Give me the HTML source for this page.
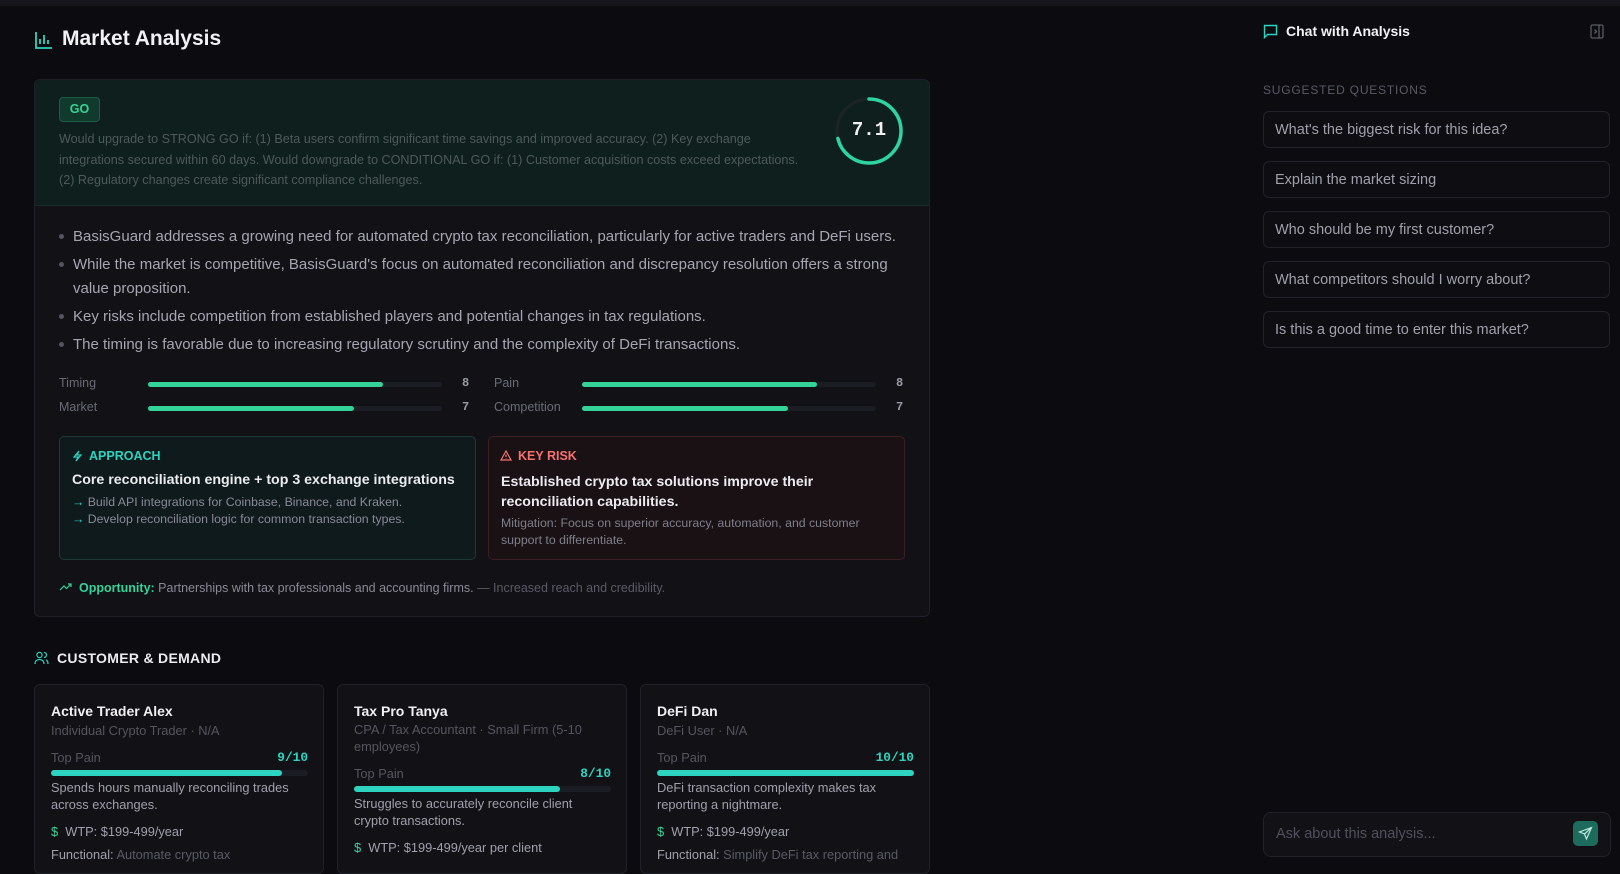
<!DOCTYPE html>
<html><head><meta charset="utf-8"><style>
*{box-sizing:border-box;margin:0;padding:0}
body{width:1620px;height:861px;overflow:hidden;background:#0b0b10;font-family:"Liberation Sans",sans-serif;color:#e6e6ea;position:relative}
.a{position:absolute}
.top{left:0;top:0;width:1620px;height:6px;background:#16161c}
.card{border:1px solid #202028;border-radius:6px;background:#111116}
.mut{color:#6b6b78}
.txt{color:#a6a6b2}
.bar{height:5px;border-radius:3px;background:#1c1c24}
.bar i{display:block;height:5px;border-radius:3px;background:#34d399}
.q{left:1263px;width:347px;height:37px;border:1px solid #22222b;border-radius:6px;font-size:14.5px;color:#a0a0ac;padding:10px 11px;background:#0d0d12}
.mono{font-family:"Liberation Mono",monospace;font-weight:bold}
.ct{font-size:12.8px}
</style></head><body>
<div class="a top"></div>
<svg class="a" style="left:35px;top:31px" width="18" height="18" viewBox="0 0 18 18" fill="none" stroke="#2dd4bf" stroke-width="1.8"><path d="M1 1v16h16M5 13V8M9 13V4M13 13V9"/></svg>
<div class="a" style="left:62px;top:27px;font-size:21px;font-weight:bold;color:#f2f2f4">Market Analysis</div>

<div class="a card" style="left:34px;top:79px;width:896px;height:538px;overflow:hidden">
 <div style="height:126px;background:#0f1f1e;border-bottom:1px solid #1a2a28"></div>
</div>
<div class="a" style="left:59px;top:97px;width:41px;height:25px;border:1px solid #1f5a44;background:#0f3a2c;border-radius:4px;color:#34d399;font-size:12.5px;font-weight:bold;text-align:center;line-height:23px">GO</div>
<div class="a" style="left:59px;top:129px;width:758px;font-size:12.6px;line-height:20.5px;color:#4e5a5a">Would upgrade to STRONG GO if: (1) Beta users confirm significant time savings and improved accuracy. (2) Key exchange<br>integrations secured within 60 days. Would downgrade to CONDITIONAL GO if: (1) Customer acquisition costs exceed expectations.<br>(2) Regulatory changes create significant compliance challenges.</div>
<svg class="a" style="left:834px;top:96px" width="70" height="70" viewBox="0 0 70 70"><circle cx="35" cy="35" r="32" fill="none" stroke="#1b2324" stroke-width="3.5"/><circle cx="35" cy="35" r="32" fill="none" stroke="#2dd4a0" stroke-width="3.5" stroke-dasharray="143 201" transform="rotate(-90 35 35)" stroke-linecap="round"/></svg>
<div class="a mono" style="left:834px;top:119px;width:70px;text-align:center;font-size:19px;color:#f0f0f0">7.1</div>

<div class="a txt" style="left:59px;top:225px;width:850px;font-size:15px;line-height:24px">
<div style="position:relative;padding-left:14px;margin-bottom:4px"><span style="position:absolute;left:0;top:9px;width:5px;height:5px;border-radius:50%;background:#55555f"></span>BasisGuard addresses a growing need for automated crypto tax reconciliation, particularly for active traders and DeFi users.</div>
<div style="position:relative;padding-left:14px;margin-bottom:4px;width:840px"><span style="position:absolute;left:0;top:9px;width:5px;height:5px;border-radius:50%;background:#55555f"></span>While the market is competitive, BasisGuard's focus on automated reconciliation and discrepancy resolution offers a strong value proposition.</div>
<div style="position:relative;padding-left:14px;margin-bottom:4px"><span style="position:absolute;left:0;top:9px;width:5px;height:5px;border-radius:50%;background:#55555f"></span>Key risks include competition from established players and potential changes in tax regulations.</div>
<div style="position:relative;padding-left:14px"><span style="position:absolute;left:0;top:9px;width:5px;height:5px;border-radius:50%;background:#55555f"></span>The timing is favorable due to increasing regulatory scrutiny and the complexity of DeFi transactions.</div>
</div>

<div class="a mut" style="left:59px;top:376px;font-size:12.5px">Timing</div>
<div class="a bar" style="left:148px;top:382px;width:294px"><i style="width:80%"></i></div>
<div class="a mono mut" style="left:462px;top:376px;font-size:12px;color:#9a9aa6">8</div>
<div class="a mut" style="left:59px;top:400px;font-size:12.5px">Market</div>
<div class="a bar" style="left:148px;top:406px;width:294px"><i style="width:70%"></i></div>
<div class="a mono" style="left:462px;top:400px;font-size:12px;color:#9a9aa6">7</div>
<div class="a mut" style="left:494px;top:376px;font-size:12.5px">Pain</div>
<div class="a bar" style="left:582px;top:382px;width:294px"><i style="width:80%"></i></div>
<div class="a mono" style="left:896px;top:376px;font-size:12px;color:#9a9aa6">8</div>
<div class="a mut" style="left:494px;top:400px;font-size:12.5px">Competition</div>
<div class="a bar" style="left:582px;top:406px;width:294px"><i style="width:70%"></i></div>
<div class="a mono" style="left:896px;top:400px;font-size:12px;color:#9a9aa6">7</div>

<div class="a" style="left:59px;top:436px;width:417px;height:124px;border:1px solid #1b3a36;border-radius:5px;background:#0f1a1c"></div>
<svg class="a" style="left:72px;top:450px" width="11" height="12" viewBox="0 0 11 12" fill="none" stroke="#2dd4bf" stroke-width="1.2"><path d="M7 1L2 7h4l-2 4 5-6H5z"/></svg>
<div class="a" style="left:89px;top:449px;font-size:12.5px;font-weight:bold;color:#2dd4bf">APPROACH</div>
<div class="a" style="left:72px;top:472px;font-size:14.2px;font-weight:bold;color:#ececf0">Core reconciliation engine + top 3 exchange integrations</div>
<div class="a txt" style="left:72px;top:494px;font-size:12.3px;line-height:16.5px;color:#8a8a96"><span style="color:#2dd4bf">→</span> Build API integrations for Coinbase, Binance, and Kraken.<br><span style="color:#2dd4bf">→</span> Develop reconciliation logic for common transaction types.</div>

<div class="a" style="left:488px;top:436px;width:417px;height:124px;border:1px solid #3d1f22;border-radius:5px;background:#1a1114"></div>
<svg class="a" style="left:500px;top:450px" width="12" height="11" viewBox="0 0 12 11" fill="none" stroke="#f87171" stroke-width="1.2"><path d="M6 1L1 10h10zM6 4.5v2.5M6 8.2v.4"/></svg>
<div class="a" style="left:518px;top:449px;font-size:12.5px;font-weight:bold;color:#f87171">KEY RISK</div>
<div class="a" style="left:501px;top:472px;width:390px;font-size:14.2px;font-weight:bold;line-height:20px;color:#ececf0">Established crypto tax solutions improve their reconciliation capabilities.</div>
<div class="a" style="left:501px;top:515px;width:400px;font-size:12.3px;line-height:16.5px;color:#7f7f8b">Mitigation: Focus on superior accuracy, automation, and customer support to differentiate.</div>

<svg class="a" style="left:59px;top:582px" width="13" height="9" viewBox="0 0 13 9" fill="none" stroke="#34d399" stroke-width="1.2"><path d="M1 8l4-4 2.5 2.5L12 2M9 2h3v3"/></svg>
<div class="a" style="left:79px;top:581px;font-size:12.5px;color:#8a8a96"><b style="color:#34d399">Opportunity:</b> Partnerships with tax professionals and accounting firms. <span style="color:#5a5a66">— Increased reach and credibility.</span></div>

<svg class="a" style="left:34px;top:651px" width="15" height="14" viewBox="0 0 15 14" fill="none" stroke="#2dd4bf" stroke-width="1.2"><circle cx="5.5" cy="4" r="2.6"/><path d="M1 13c0-3 2-4.5 4.5-4.5S10 10 10 13M10 1.5a2.5 2.5 0 010 5M12 8.8c1.3.6 2 2 2 4.2"/></svg>
<div class="a" style="left:57px;top:650px;font-size:14px;font-weight:bold;color:#ececf0;letter-spacing:.3px">CUSTOMER &amp; DEMAND</div>

<div class="a card" style="left:34px;top:684px;width:290px;height:190px"></div>
<div class="a card" style="left:337px;top:684px;width:290px;height:190px"></div>
<div class="a card" style="left:640px;top:684px;width:290px;height:190px"></div>

<div class="a" style="left:51px;top:703px;width:257px">
 <div style="font-size:14px;font-weight:bold;color:#f0f0f2">Active Trader Alex</div>
 <div class="ct" style="color:#55555f;margin-top:3px;line-height:17px">Individual Crypto Trader · N/A</div>
 <div class="ct" style="display:flex;justify-content:space-between;margin-top:11px;color:#55555f">Top Pain<span class="mono" style="color:#2dd4bf">9/10</span></div>
 <div class="bar" style="margin-top:5px;height:6px;background:#1c1c24"><i style="width:90%;height:6px;background:#2dd4bf"></i></div>
 <div class="ct" style="color:#a0a0ac;line-height:16.5px;margin-top:4px">Spends hours manually reconciling trades across exchanges.</div>
 <div class="ct" style="color:#a0a0ac;margin-top:11px"><span style="color:#34d399">$</span>&nbsp; WTP: $199-499/year</div>
 <div class="ct" style="color:#a0a0ac;margin-top:8px">Functional: <span style="color:#5a5a66">Automate crypto tax</span></div>
</div>
<div class="a" style="left:354px;top:703px;width:257px">
 <div style="font-size:14px;font-weight:bold;color:#f0f0f2">Tax Pro Tanya</div>
 <div class="ct" style="color:#55555f;margin-top:3px;line-height:16.5px">CPA / Tax Accountant · Small Firm (5-10 employees)</div>
 <div class="ct" style="display:flex;justify-content:space-between;margin-top:11px;color:#55555f">Top Pain<span class="mono" style="color:#2dd4bf">8/10</span></div>
 <div class="bar" style="margin-top:5px;height:6px"><i style="width:80%;height:6px;background:#2dd4bf"></i></div>
 <div class="ct" style="color:#a0a0ac;line-height:16.5px;margin-top:4px;width:235px">Struggles to accurately reconcile client crypto transactions.</div>
 <div class="ct" style="color:#a0a0ac;margin-top:11px"><span style="color:#34d399">$</span>&nbsp; WTP: $199-499/year per client</div>
</div>
<div class="a" style="left:657px;top:703px;width:257px">
 <div style="font-size:14px;font-weight:bold;color:#f0f0f2">DeFi Dan</div>
 <div class="ct" style="color:#55555f;margin-top:3px;line-height:17px">DeFi User · N/A</div>
 <div class="ct" style="display:flex;justify-content:space-between;margin-top:11px;color:#55555f">Top Pain<span class="mono" style="color:#2dd4bf">10/10</span></div>
 <div class="bar" style="margin-top:5px;height:6px"><i style="width:100%;height:6px;background:#2dd4bf"></i></div>
 <div class="ct" style="color:#a0a0ac;line-height:16.5px;margin-top:4px">DeFi transaction complexity makes tax reporting a nightmare.</div>
 <div class="ct" style="color:#a0a0ac;margin-top:11px"><span style="color:#34d399">$</span>&nbsp; WTP: $199-499/year</div>
 <div class="ct" style="color:#a0a0ac;margin-top:8px">Functional: <span style="color:#5a5a66">Simplify DeFi tax reporting and</span></div>
</div>

<svg class="a" style="left:1263px;top:24px" width="15" height="15" viewBox="0 0 15 15" fill="none" stroke="#2dd4bf" stroke-width="1.4"><path d="M1.5 1.5h12v9h-9l-3 3z"/></svg>
<div class="a" style="left:1286px;top:23px;font-size:14px;font-weight:bold;color:#f2f2f4">Chat with Analysis</div>
<svg class="a" style="left:1590px;top:24px" width="14" height="15" viewBox="0 0 14 15" fill="none" stroke="#5a5a66" stroke-width="1.3"><rect x="1" y="1" width="12" height="13" rx="1.5"/><path d="M9 1v13M4.5 5.5l2 2-2 2"/></svg>
<div class="a" style="left:1263px;top:83px;font-size:12px;color:#5a5a66;letter-spacing:.8px">SUGGESTED QUESTIONS</div>
<div class="a q" style="top:111px">What's the biggest risk for this idea?</div>
<div class="a q" style="top:161px">Explain the market sizing</div>
<div class="a q" style="top:211px">Who should be my first customer?</div>
<div class="a q" style="top:261px">What competitors should I worry about?</div>
<div class="a q" style="top:311px">Is this a good time to enter this market?</div>

<div class="a" style="left:1263px;top:812px;width:348px;height:45px;border:1px solid #22222b;border-radius:8px;background:#111116"></div>
<div class="a" style="left:1276px;top:826px;font-size:14.5px;color:#50505e">Ask about this analysis...</div>
<div class="a" style="left:1573px;top:821px;width:25px;height:25px;border-radius:5px;background:#1d6b5c"></div>
<svg class="a" style="left:1578px;top:826px" width="15" height="15" viewBox="0 0 15 15" fill="none" stroke="#bfe9df" stroke-width="1.2"><path d="M13.5 1.5L1.5 6l5 2 2 5zM13.5 1.5L6.5 8"/></svg>
</body></html>
